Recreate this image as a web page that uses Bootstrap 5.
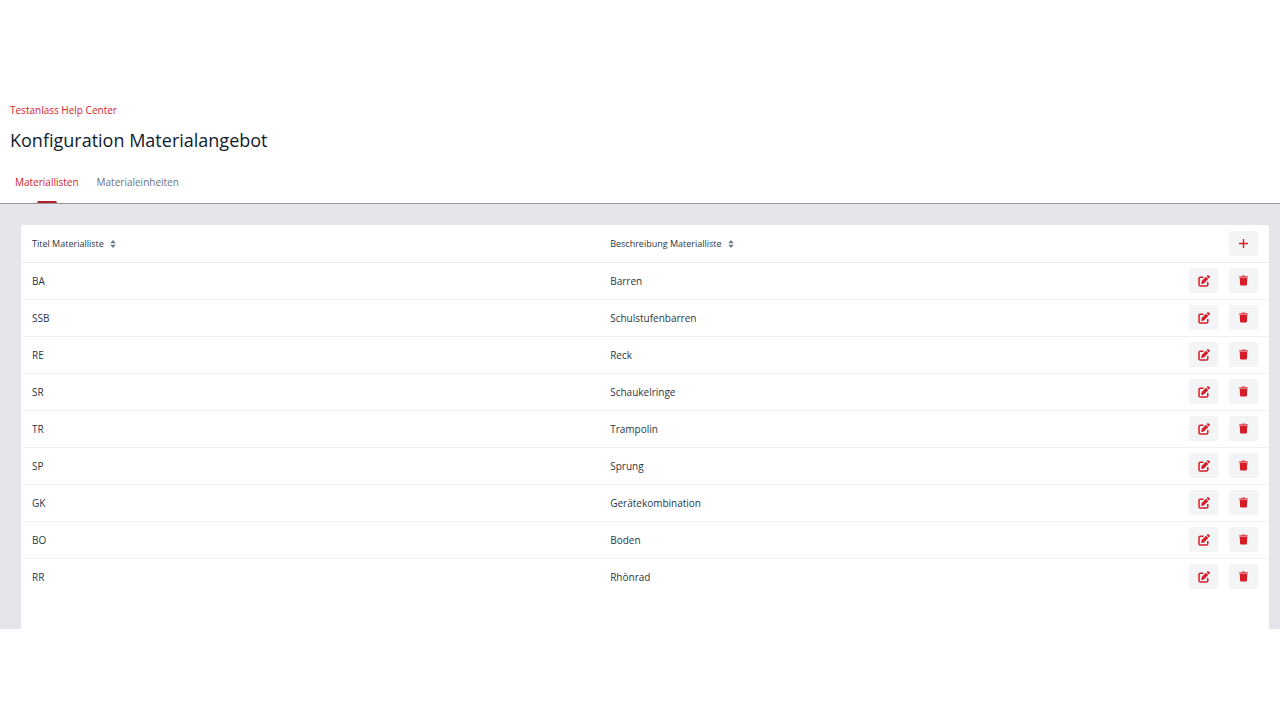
<!DOCTYPE html>
<html lang="de">
<head>
<meta charset="utf-8">
<meta name="viewport" content="width=device-width, initial-scale=1">
<title>Konfiguration Materialangebot</title>
<link href="https://cdn.jsdelivr.net/npm/bootstrap@5.3.0/dist/css/bootstrap.min.css" rel="stylesheet">
<style>
  :root { --brand: #d61c27; --ink: #0f1c2e; --text: #2a3646; --muted: #6b7280; --surface: #e5e6eb; --line: #eff0f3; }
  body { font-family: "Open Sans", "Noto Sans", sans-serif; font-size: 10px; line-height: 16px; color: var(--text); background: #fff; }
  .page { padding: 102px 0 91px; }
  .page-head { padding: 0 10px; }
  .event-link { color: var(--brand); text-decoration: none; }
  .page-title { font-size: 18px; line-height: 28px; font-weight: 400; color: var(--ink); margin: 8px 0 0; }
  .tabs { border-bottom: 1px solid #97989c; padding: 0 7px; margin-top: 8px; gap: 2px; }
  .tabs .nav-link { color: var(--muted); padding: 12px 8px 13px; line-height: 16px; position: relative; }
  .tabs .nav-link.active { color: var(--brand); }
  .tabs .nav-link.active::after { content: ""; position: absolute; left: 50%; bottom: 0; width: 20px; height: 2px; margin-left: -10px; border-radius: 2px 2px 0 0; background: #b3202a; }
  .surface { background: var(--surface); padding: 21px 11px 0 21px; }
  .panel { background: #fff; border-radius: 3px 3px 0 0; padding-bottom: 34px; }
  .list-table { table-layout: fixed; --bs-table-bg: transparent; color: var(--text); }
  .list-table > :not(caption) > * > * { padding: 0 11px; height: 37px; border-bottom: 1px solid var(--line); vertical-align: middle; color: var(--text); }
  .list-table > thead > tr > th { padding-top: 1px; font-size: 9px; font-weight: 400; border-bottom: 1px solid #eaebee; }
  .list-table > tbody > tr:last-child > td { border-bottom: 0; }
  .list-table .col-main { width: 46.33%; }
  .sort-btn { border: 0; background: none; padding: 0; color: inherit; gap: 6px; }
  .sort-btn svg { color: #6f7889; }
  .tool-btn { width: 29px; height: 25px; padding: 0; border: 0; border-radius: 3px; background: #f3f4f6; color: var(--brand); display: flex; align-items: center; justify-content: center; }
  .tool-btn:hover { background: #e9ebee; color: var(--brand); }
  .tools { gap: 11px; }
  svg { display: block; fill: currentColor; }
</style>
</head>
<body>
<svg width="0" height="0" class="position-absolute" aria-hidden="true">
  <symbol id="edit" viewBox="0 0 12 12"><path d="M5 2.200H2.300A1.300 1.300 0 0 0 1 3.500V9.700A1.300 1.300 0 0 0 2.300 11H8.500A1.300 1.300 0 0 0 9.800 9.700V7.400" fill="none" stroke="currentColor" stroke-width="1.500" stroke-linecap="round"/><path d="M8 1.700l2.300 2.300-4.400 4.400-2.800.6.6-2.900zM8.600 1.100l.7-.7a1 1 0 0 1 1.400 0l.9.9a1 1 0 0 1 0 1.400l-.7.7z"/></symbol>
  <symbol id="trash" viewBox="0 0 10 12"><path opacity=".8" d="M3.300.5h3.400l.5.8H9.500a.5.5 0 0 1 .5.500v.9H0v-.9a.5.500 0 0 1 .5-.5h2.300z"/><path d="M.8 3h8.400l-.4 7.700a1 1 0 0 1-1 .9H2.200a1 1 0 0 1-1-.9z"/></symbol>
  <symbol id="sort" viewBox="0 0 6 8"><path d="M3 0l2.800 3.300H.2zM3 8L.2 4.700h5.600z"/></symbol>
</svg>
<main class="page">
  <header>
    <div class="page-head">
      <a class="event-link d-block" href="#">Testanlass Help Center</a>
      <h1 class="page-title">Konfiguration Materialangebot</h1>
    </div>
    <nav class="nav tabs" aria-label="Ansichten">
      <a class="nav-link active" aria-current="page" href="#">Materiallisten</a>
      <a class="nav-link" href="#">Materialeinheiten</a>
    </nav>
  </header>
  <section class="surface">
    <div class="panel">
      <table class="table list-table mb-0">
        <thead>
          <tr>
            <th class="col-main" scope="col"><button class="sort-btn d-flex align-items-center" type="button">Titel Materialliste <svg width="6" height="8"><use href="#sort"/></svg></button></th>
            <th class="col-main" scope="col"><button class="sort-btn d-flex align-items-center" type="button">Beschreibung Materialliste <svg width="6" height="8"><use href="#sort"/></svg></button></th>
            <th scope="col"><div class="d-flex justify-content-end"><button class="btn tool-btn" type="button" aria-label="Hinzufügen"><svg width="9" height="9" viewBox="0 0 9 9"><path d="M4.500.5v8M.5 4.500h8" stroke="currentColor" stroke-width="1.400" stroke-linecap="round"/></svg></button></div></th>
          </tr>
        </thead>
        <tbody id="rows"></tbody>
      </table>
    </div>
  </section>
</main>
<script>
  const lists = [["BA", "Barren"], ["SSB", "Schulstufenbarren"], ["RE", "Reck"], ["SR", "Schaukelringe"], ["TR", "Trampolin"], ["SP", "Sprung"], ["GK", "Gerätekombination"], ["BO", "Boden"], ["RR", "Rhönrad"]];
  document.getElementById("rows").innerHTML = lists.map(([code, name]) => `
    <tr>
      <td>${code}</td>
      <td>${name}</td>
      <td><div class="d-flex justify-content-end tools">
        <button class="btn tool-btn" type="button" aria-label="${name} bearbeiten"><svg width="12" height="12"><use href="#edit"/></svg></button>
        <button class="btn tool-btn" type="button" aria-label="${name} löschen"><svg width="9" height="11"><use href="#trash"/></svg></button>
      </div></td>
    </tr>`).join("");
</script>
<script src="https://cdn.jsdelivr.net/npm/bootstrap@5.3.0/dist/js/bootstrap.bundle.min.js"></script>
</body>
</html>
